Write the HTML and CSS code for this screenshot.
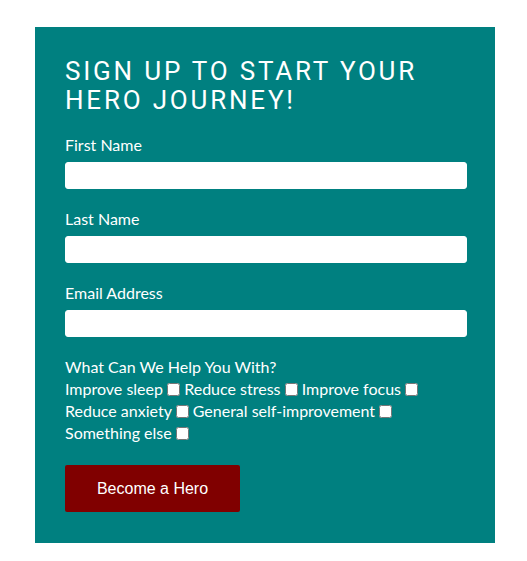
FILE: index.html
```html
<!DOCTYPE html>
<html>
<head>
<meta charset="utf-8">
<link rel="stylesheet" href="styles.css">
</head>
<body>
<form class="card">
  <h1 class="title">Sign up to start your hero journey!</h1>
  <label class="label" for="fn">First Name</label>
  <input class="field" id="fn" type="text">
  <label class="label" for="ln">Last Name</label>
  <input class="field" id="ln" type="text">
  <label class="label" for="em">Email Address</label>
  <input class="field" id="em" type="email">
  <div class="options">
    <div>What Can We Help You With?</div>
    <div>Improve sleep <input type="checkbox" class="cb"> Reduce stress <input type="checkbox" class="cb"> Improve focus <input type="checkbox" class="cb"> Reduce anxiety <input type="checkbox" class="cb"> General self-improvement <input type="checkbox" class="cb"> Something else <input type="checkbox" class="cb"></div>
  </div>
  <button type="button" class="btn">Become a Hero</button>
</form>
</body>
</html>
```
FILE: styles.css
```css
html, body { margin: 0; background: #fff; }
body { padding: 27px 0 0 35px; }
.card {
  width: 400px;
  padding: 30px 30px 31px;
  background: #008080;
  color: #fff;
  font-family: Lato, "Noto Sans", sans-serif;
  font-size: 16px;
  display: flex;
  flex-direction: column;
  align-items: flex-start;
}
.title {
  margin: 0 0 19px;
  font-family: Roboto, sans-serif;
  font-weight: 400;
  font-size: 26px;
  line-height: 29px;
  letter-spacing: 2.8px;
  text-transform: uppercase;
}
.label { line-height: 22px; margin-bottom: 6px; }
.field {
  width: 100%;
  height: 25px;
  margin: 0 0 19px;
  padding: 0;
  border: 1px solid #fff;
  border-radius: 3px;
  background: #fff;
}
.options { line-height: 22px; margin: 0 0 21px; }
.cb { width: 13px; height: 13px; margin: 0; vertical-align: -1px; }
.btn {
  width: 175px;
  height: 47px;
  border: 0;
  border-radius: 2px;
  background: #800000;
  color: #fff;
  font-family: "Liberation Sans", Arial, sans-serif;
  font-size: 16px;
}
```
